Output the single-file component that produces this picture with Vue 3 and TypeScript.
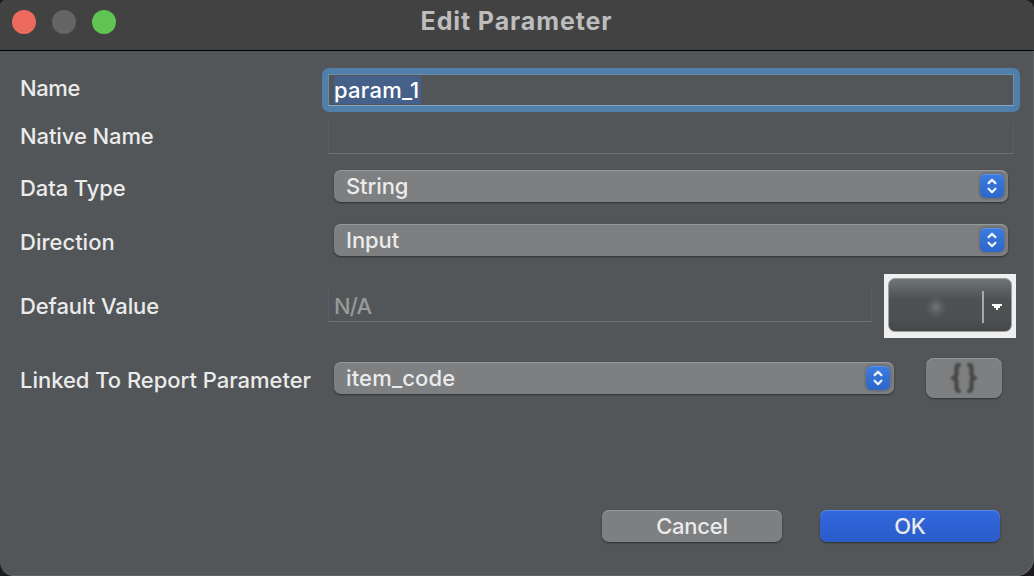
<script setup lang="ts">
import { ref } from 'vue'

const name = ref('param_1')
const dataType = ref('String')
const direction = ref('Input')
const linked = ref('item_code')
</script>

<template>
  <div class="screen">
    <main class="window">
      <header class="titlebar">
        <div class="lights">
          <i class="light close"></i>
          <i class="light minimize"></i>
          <i class="light zoom"></i>
        </div>
        <h1>Edit Parameter</h1>
      </header>

      <section class="form">
        <div class="row row-name">
          <label>Name</label>
          <div class="focus-ring">
            <div class="focus-field"><span class="selection">{{ name }}</span></div>
          </div>
        </div>

        <div class="row row-native">
          <label>Native Name</label>
          <div class="field"></div>
        </div>

        <div class="row row-type">
          <label>Data Type</label>
          <div class="select">
            <span>{{ dataType }}</span>
            <i class="stepper"><svg viewBox="0 0 26 26"><path d="M9.300 9.900 13 6.200l3.700 3.700M9.300 16l3.700 3.700 3.700-3.700" /></svg></i>
          </div>
        </div>

        <div class="row row-direction">
          <label>Direction</label>
          <div class="select">
            <span>{{ direction }}</span>
            <i class="stepper"><svg viewBox="0 0 26 26"><path d="M9.300 9.900 13 6.200l3.700 3.700M9.300 16l3.700 3.700 3.700-3.700" /></svg></i>
          </div>
        </div>

        <div class="row row-default">
          <label>Default Value</label>
          <div class="field field-default">N/A</div>
          <div class="split-frame">
            <div class="split">
              <div class="split-main"><i class="smudge"></i></div>
              <i class="divider"></i>
              <svg class="caret" viewBox="0 0 10 6" shape-rendering="crispEdges"><path d="M0 0h10v2H8v2H6v2H4V4H2V2H0z" /></svg>
            </div>
          </div>
        </div>

        <div class="row row-linked">
          <label>Linked To Report Parameter</label>
          <div class="select select-linked">
            <span class="item">{{ linked }}</span>
            <i class="stepper"><svg viewBox="0 0 26 26"><path d="M9.300 9.900 13 6.200l3.700 3.700M9.300 16l3.700 3.700 3.700-3.700" /></svg></i>
          </div>
          <div class="brace">
            <svg viewBox="0 0 26 30">
              <path d="M9.500 2H8Q5.500 2 5.500 5v6q0 3-3 4 3 1 3 4v6q0 3 2.500 3h1.500M16.500 2H18q2.500 0 2.500 3v6q0 3 3 4-3 1-3 4v6q0 3-2.500 3h-1.500" />
            </svg>
          </div>
        </div>
      </section>

      <footer>
        <div class="button">Cancel</div>
        <div class="button primary">OK</div>
      </footer>
    </main>
  </div>
</template>

<style>
html,
body {
  margin: 0;
  background: #1d1b1d;
}
</style>

<style scoped>
* {
  box-sizing: border-box;
}
.screen {
  width: 1034px;
  height: 576px;
  overflow: hidden;
  background: #1d1b1d;
}
.window {
  width: 1034px;
  height: 576px;
  border-radius: 6px 10px 18px 14px;
  overflow: hidden;
  background: #525658;
  box-shadow: inset -1px -1px 0 #606364;
  font-family: Inter, "Liberation Sans", sans-serif;
  font-size: 22px;
  font-weight: 500;
  letter-spacing: -0.1px;
  line-height: 26px;
  color: #ebebeb;
  white-space: nowrap;
}
.titlebar {
  display: grid;
  grid-template-columns: 128px 1fr 128px;
  height: 51px;
  background: #424242;
  border-bottom: 1px solid #000;
}
.lights {
  display: flex;
  gap: 16px;
  padding: 10px 0 0 12px;
}
.light {
  width: 24px;
  height: 24px;
  border-radius: 50%;
}
.close { background: #ed6a5e; }
.minimize { background: #656565; }
.zoom { background: #61c554; }
h1 {
  margin: 8px 0 0 -1px;
  font-size: 25px;
  font-weight: 700;
  letter-spacing: 0.9px;
  line-height: 27px;
  text-align: center;
  color: #bdbdbd;
}
.form {
  padding-top: 17px;
}
.row {
  display: flex;
  align-items: center;
}
label {
  padding-left: 20px;
  flex: none;
}
.row-name { height: 44px; }
.row-name label { width: 322px; padding-bottom: 4px; letter-spacing: -0.4px; }
.focus-ring {
  width: 698px;
  height: 44px;
  padding: 6px;
  border-radius: 7px;
  background: #507faa;
}
.focus-field {
  height: 32px;
  padding: 1px 0 0 5px;
  background: #525658;
  border: 1px solid #6c8ca8;
  border-bottom-color: #7faacd;
}
.selection {
  display: block;
  width: 87px;
  height: 28px;
  line-height: 29px;
  letter-spacing: 0.25px;
  color: #fff;
  background: #466189;
}
.row-native { height: 32px; margin-top: 10px; }
.row-native label,
.row-default label { width: 328px; }
.row-native label { padding-bottom: 4px; }
.field {
  width: 686px;
  height: 32px;
  border: 1px solid #5a5e60;
  border-top-color: transparent;
  border-bottom-color: #6c7072;
}
.row-type { height: 32px; margin-top: 16px; }
.row-direction { height: 32px; margin-top: 22px; }
.row-type label,
.row-direction label,
.row-linked label { width: 334px; padding-top: 4px; }
.row-direction label { letter-spacing: 0; }
.row-linked label { letter-spacing: -0.03px; }
.select {
  display: flex;
  align-items: center;
  justify-content: space-between;
  width: 674px;
  height: 32px;
  padding: 0 3px 0 12px;
  border-radius: 7px;
  background: #7d7f80;
  box-shadow: inset 0 1px 0 #969899, 0 1px 2px rgba(0, 0, 0, 0.45);
}
.item { letter-spacing: 0.15px; }
.stepper {
  width: 26px;
  height: 26px;
  border-radius: 6.500px;
  border: 0.500px solid #6c7379;
  background: linear-gradient(#3d7be0, #2c66c8);
  box-shadow: inset 0 1px 0 #5a90e6, 0 0 2px rgba(0, 0, 0, 0.3);
}
.stepper svg {
  display: block;
  width: 100%;
  height: 100%;
  fill: none;
  stroke: #f0f4fc;
  stroke-width: 2.4;
  stroke-linecap: round;
  stroke-linejoin: round;
}
.row-default { height: 64px; margin-top: 18px; }
.field-default {
  width: 544px;
  padding: 2px 0 0 5px;
  letter-spacing: -0.9px;
  color: #98999a;
}
.split-frame {
  width: 132px;
  height: 64px;
  margin-left: 12px;
  padding: 4px;
  background: #efefef;
}
.split {
  display: flex;
  align-items: center;
  height: 54px;
  padding-top: 4px;
  border: 1px solid #9b9d9e;
  border-radius: 7px;
  background: linear-gradient(#707576 0, #5c6061 22%, #4e5152 40%, #4d5152 75%, #444748 100%);
}
.split-main {
  display: flex;
  width: 93px;
  padding-left: 37px;
}
.smudge {
  width: 20px;
  height: 22px;
  background: radial-gradient(closest-side, #717475, #5e6162 45%, transparent);
}
.divider {
  width: 2px;
  height: 32px;
  background: #a7a8a9;
}
.caret {
  width: 10px;
  height: 6px;
  margin-left: 8px;
  fill: #fff;
}
.row-linked { height: 40px; margin-top: 20px; }
.select-linked { width: 560px; }
.brace {
  display: flex;
  align-items: center;
  justify-content: center;
  width: 76px;
  height: 40px;
  margin-left: 32px;
  border-radius: 8px;
  background: #7d7f80;
  box-shadow: inset 0 1px 0 #929495, 0 1px 2px rgba(0, 0, 0, 0.4);
}
.brace svg {
  width: 26px;
  height: 30px;
  fill: none;
  stroke: #454545;
  stroke-width: 4;
  filter: blur(0.8px);
}
footer {
  display: flex;
  gap: 38px;
  margin-top: 112px;
  padding-left: 602px;
}
.button {
  width: 180px;
  height: 32px;
  border-radius: 7px;
  line-height: 33px;
  letter-spacing: -0.25px;
  text-align: center;
  background: #7d7f80;
  box-shadow: inset 0 1px 0 #969899, 0 1px 2px rgba(0, 0, 0, 0.45);
}
.primary {
  background: linear-gradient(#3269df, #2a5bc8);
  box-shadow: inset 0 1px 0 #5d89e6, 0 1px 2px rgba(0, 0, 0, 0.45);
}
</style>
